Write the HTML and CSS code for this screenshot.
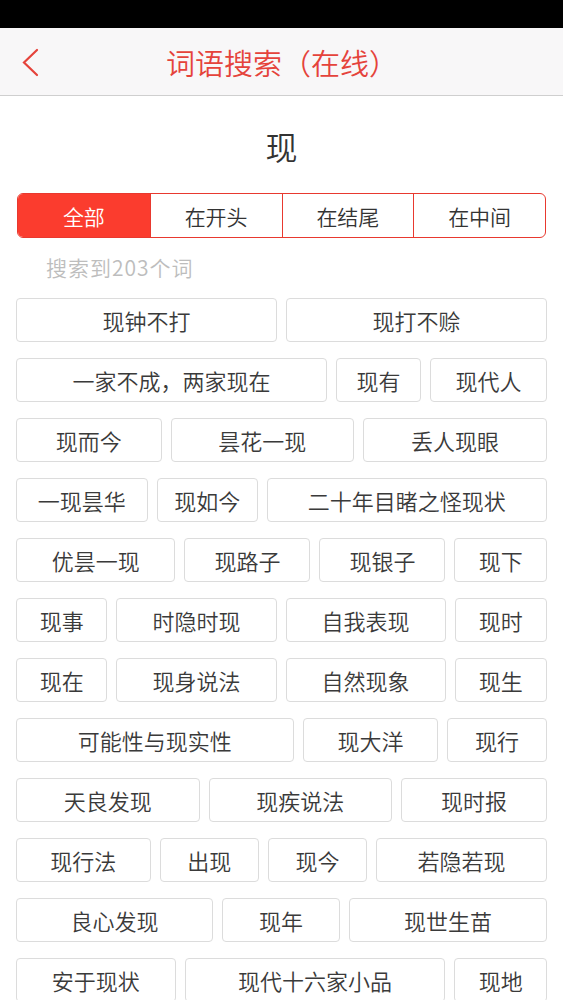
FILE: index.html
```html
<!DOCTYPE html>
<html lang="zh-CN">
<head>
<meta charset="utf-8">
<title>词语搜索（在线）</title>
<link rel="stylesheet" href="styles.css">
</head>
<body>
<div class="status"></div>
<header class="nav">
  <svg class="back" width="20" height="30" viewBox="0 0 20 30"><polyline points="16,2 3,14.5 16,27" fill="none" stroke="#e5433b" stroke-width="2.2" stroke-linecap="round" stroke-linejoin="miter"/></svg>
  <h1 class="title">词语搜索（在线）</h1>
</header>
<div class="word">现</div>
<div class="tabs">
  <div class="tab active">全部</div>
  <div class="tab">在开头</div>
  <div class="tab">在结尾</div>
  <div class="tab">在中间</div>
</div>
<div class="count">搜索到203个词</div>
<div class="list">
  <div class="row"><span class="chip" style="flex-grow:261">现钟不打</span><span class="chip" style="flex-grow:261">现打不赊</span></div>
  <div class="row"><span class="chip" style="flex-grow:312">一家不成，两家现在</span><span class="chip" style="flex-grow:84">现有</span><span class="chip" style="flex-grow:116">现代人</span></div>
  <div class="row"><span class="chip" style="flex-grow:145">现而今</span><span class="chip" style="flex-grow:183">昙花一现</span><span class="chip" style="flex-grow:184">丢人现眼</span></div>
  <div class="row"><span class="chip" style="flex-grow:131">一现昙华</span><span class="chip" style="flex-grow:100">现如今</span><span class="chip" style="flex-grow:281">二十年目睹之怪现状</span></div>
  <div class="row"><span class="chip" style="flex-grow:160">优昙一现</span><span class="chip" style="flex-grow:126">现路子</span><span class="chip" style="flex-grow:126">现银子</span><span class="chip" style="flex-grow:92">现下</span></div>
  <div class="row"><span class="chip" style="flex-grow:91">现事</span><span class="chip" style="flex-grow:161">时隐时现</span><span class="chip" style="flex-grow:161">自我表现</span><span class="chip" style="flex-grow:92">现时</span></div>
  <div class="row"><span class="chip" style="flex-grow:91">现在</span><span class="chip" style="flex-grow:161">现身说法</span><span class="chip" style="flex-grow:161">自然现象</span><span class="chip" style="flex-grow:92">现生</span></div>
  <div class="row"><span class="chip" style="flex-grow:279">可能性与现实性</span><span class="chip" style="flex-grow:135">现大洋</span><span class="chip" style="flex-grow:99">现行</span></div>
  <div class="row"><span class="chip" style="flex-grow:184">天良发现</span><span class="chip" style="flex-grow:184">现疾说法</span><span class="chip" style="flex-grow:146">现时报</span></div>
  <div class="row"><span class="chip" style="flex-grow:135">现行法</span><span class="chip" style="flex-grow:99">出现</span><span class="chip" style="flex-grow:99">现今</span><span class="chip" style="flex-grow:172">若隐若现</span></div>
  <div class="row"><span class="chip" style="flex-grow:198">良心发现</span><span class="chip" style="flex-grow:118">现年</span><span class="chip" style="flex-grow:199">现世生苗</span></div>
  <div class="row"><span class="chip" style="flex-grow:160">安于现状</span><span class="chip" style="flex-grow:263">现代十六家小品</span><span class="chip" style="flex-grow:92">现地</span></div>
</div>
</body>
</html>
```

FILE: styles.css
```css
html, body {
  margin: 0;
  padding: 0;
  background: #ffffff;
}
body {
  font-family: "Noto Sans CJK SC", "Noto Sans", "Liberation Sans", sans-serif;
  font-weight: 350;
  color: #333333;
}
.status {
  height: 28px;
  background: #000000;
}
.nav {
  position: relative;
  height: 67px;
  background: #f8f7f8;
  border-bottom: 1px solid #cfcfcf;
  display: flex;
  align-items: center;
  justify-content: center;
}
.back {
  position: absolute;
  left: 21px;
  top: 20px;
}
.title {
  margin: 0;
  font-size: 29px;
  font-weight: 350;
  color: #e5433b;
  padding-left: 1px;
}
.word {
  height: 97px;
  box-sizing: border-box;
  padding-top: 3px;
  display: flex;
  align-items: center;
  justify-content: center;
  font-size: 32px;
  color: #333333;
}
.tabs {
  margin: 0 17px 0 17px;
  height: 45px;
  box-sizing: border-box;
  border: 1.5px solid #e8392f;
  border-radius: 6px;
  overflow: hidden;
  display: grid;
  grid-template-columns: repeat(4, 1fr);
}
.tab {
  display: flex;
  align-items: center;
  justify-content: center;
  font-size: 21px;
  color: #333333;
  border-left: 1.5px solid #e8392f;
}
.tab:first-child {
  border-left: none;
}
.tab.active {
  background: #fb3c2e;
  color: #ffffff;
}
.count {
  height: 60px;
  box-sizing: border-box;
  padding-left: 46px;
  padding-bottom: 2px;
  display: flex;
  align-items: center;
  font-size: 21px;
  letter-spacing: 1px;
  color: #bdbdbd;
}
.list {
  padding: 0 16px;
  display: flex;
  flex-direction: column;
  gap: 16px;
}
.row {
  display: flex;
  gap: 9px;
}
.chip {
  flex-basis: 0;
  flex-shrink: 1;
  min-width: 0;
  height: 44px;
  box-sizing: border-box;
  border: 1px solid #dcdcdc;
  border-radius: 4px;
  display: flex;
  align-items: center;
  justify-content: center;
  font-size: 22px;
  color: #3a3a3a;
  white-space: nowrap;
}
```
